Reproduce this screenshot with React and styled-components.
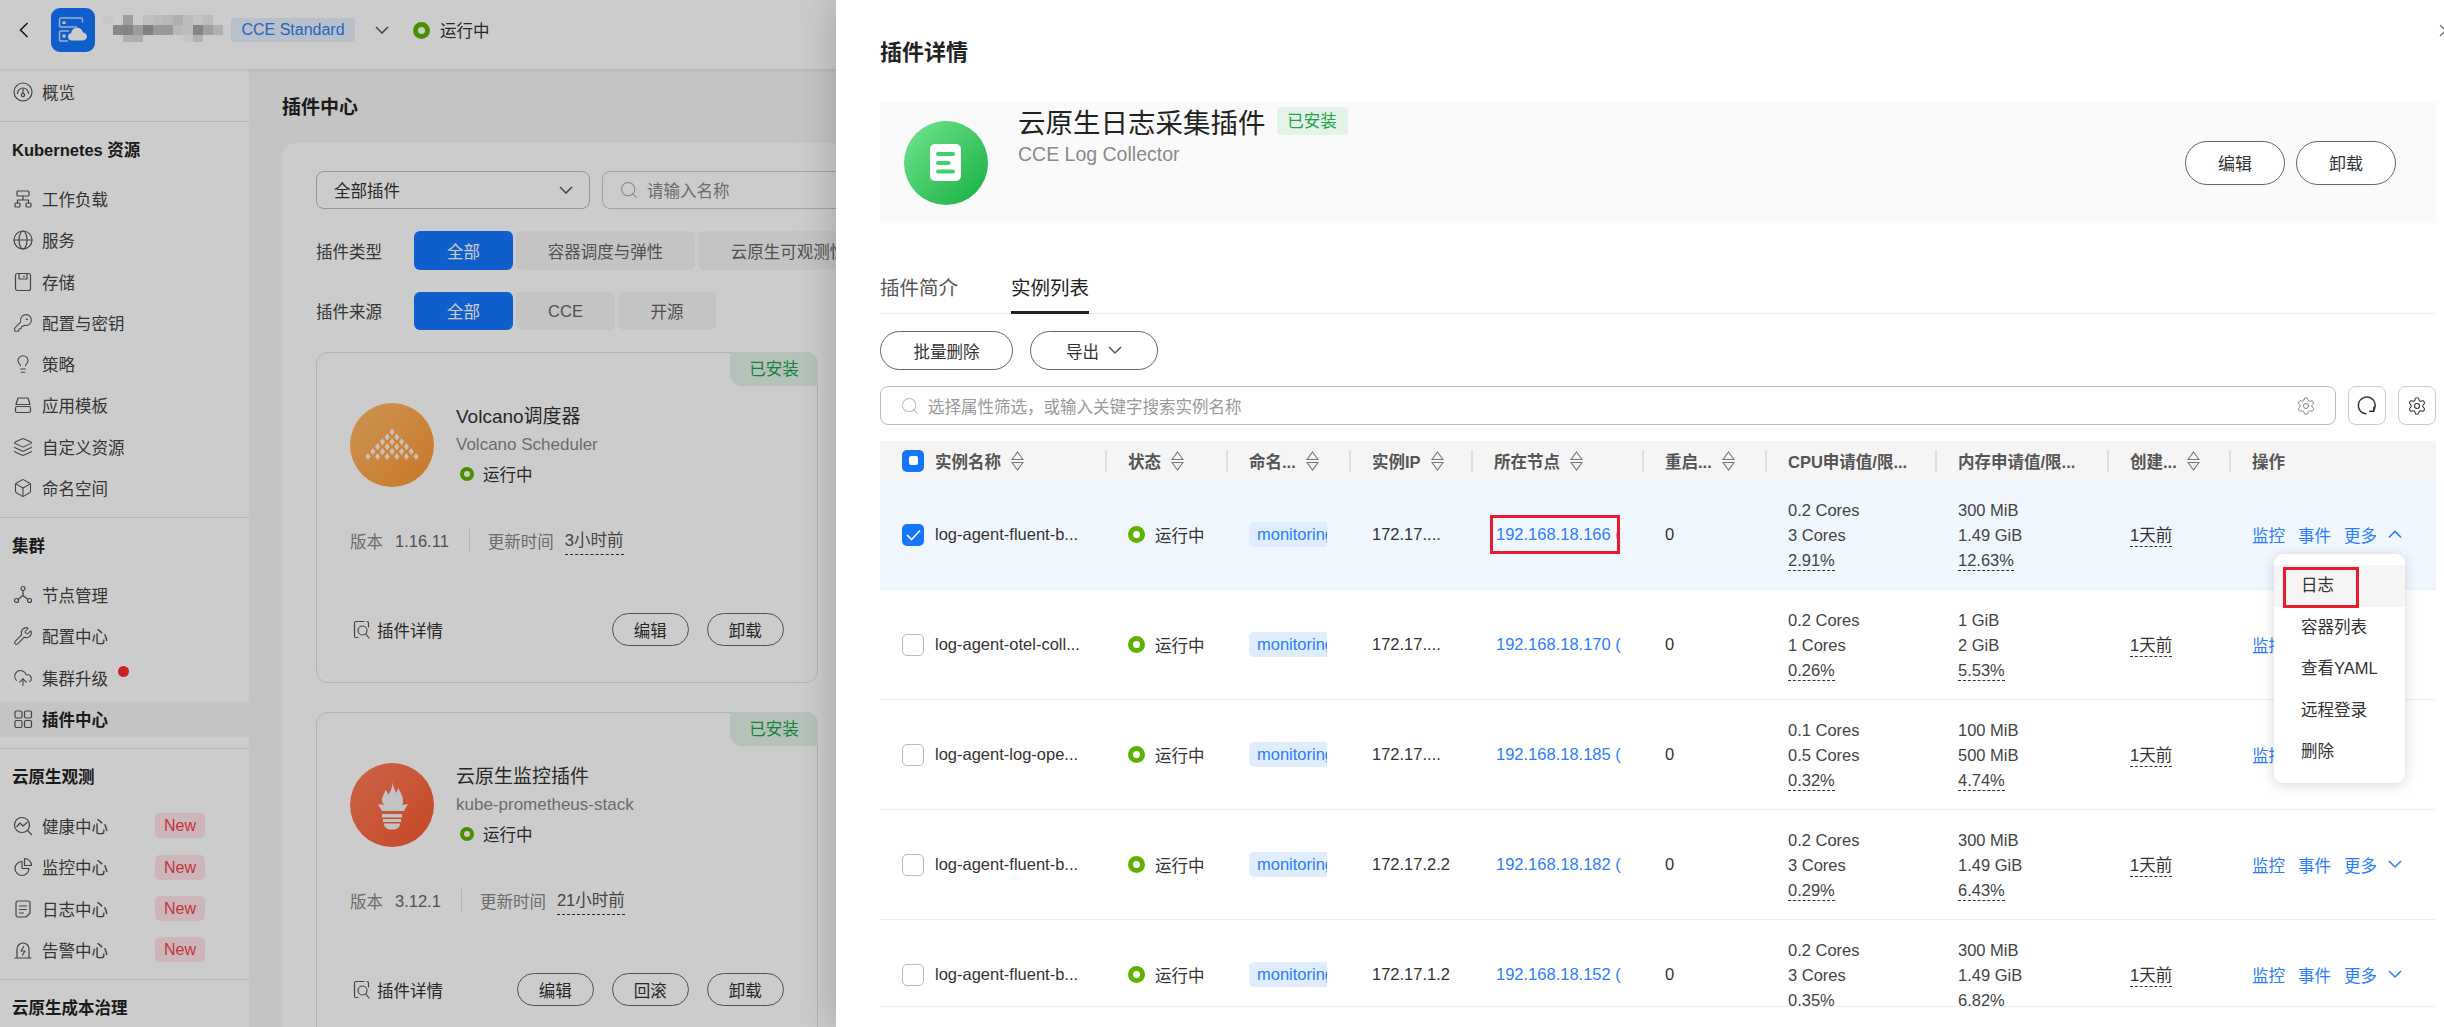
import React from 'react'
import styled, { createGlobalStyle } from 'styled-components'
import { KeyRound, Lightbulb, Layers, Box, Wrench, CloudUpload, Search, Settings } from 'lucide-react'

const FONT = '"Liberation Sans", "Noto Sans CJK SC", sans-serif'
const COLUMNS = '225px 121px 123px 122px 171px 123px 170px 172px 122px 207px'

const GlobalStyle = createGlobalStyle`
  html, body { margin: 0; padding: 0; background: #fff; }
  * { box-sizing: border-box; }
  body { font-family: ${FONT}; font-size: 16.5px; color: #333; }
`

/* page underneath the drawer */
const Page = styled.div`
  position: relative;
  width: 2444px;
  height: 1027px;
  overflow: hidden;
  background: #fff;
`
const TopBar = styled.header`
  height: 69px;
  display: flex;
  align-items: center;
  padding: 0 0 9px 19px;
  background: #fff;
  box-shadow: 0 1px 4px rgba(0, 0, 0, 0.08);
  position: relative;
`
const BackIcon = styled.svg`
  width: 10px;
  height: 16px;
  margin-right: 22px;
  fill: none;
  stroke: #222;
  stroke-width: 1.6;
`
const Logo = styled.div`
  width: 44px;
  height: 44px;
  border-radius: 9px;
  background: #1476ff;
  margin-right: 8px;
`
const Mosaic = styled.svg`
  width: 120px;
  height: 30px;
  margin-right: 8px;
`
const EditionBadge = styled.span`
  width: 124px;
  height: 24px;
  line-height: 24px;
  text-align: center;
  border-radius: 4px;
  background: #e6f0ff;
  color: #2f7df0;
  font-size: 16px;
`
const Chevron = styled.svg`
  width: ${p => p.$w || 14}px;
  height: ${p => (p.$w || 14) * 0.6}px;
  fill: none;
  stroke: ${p => p.$color || '#555'};
  stroke-width: 1.5;
  flex-shrink: 0;
  margin-left: ${p => p.$ml || 0}px;
`
const Ring = styled.span`
  display: inline-block;
  flex-shrink: 0;
  width: ${p => p.$size || 17}px;
  height: ${p => p.$size || 17}px;
  border-radius: 50%;
  border: ${p => Math.round((p.$size || 17) * 0.29)}px solid #5cb300;
  background: #fff;
`
const StatusRow = styled.div`
  display: flex;
  align-items: center;
  gap: ${p => p.$gap || 10}px;
  margin-left: ${p => p.$ml || 0}px;
  white-space: nowrap;
  color: #333;
`
const Body = styled.div`
  display: flex;
  height: 958px;
`
const Sidebar = styled.aside`
  width: 249px;
  flex-shrink: 0;
  background: #fff;
  overflow: hidden;
`
const NavGroup = styled.section`
  padding: ${p => p.$top ?? 8}px 0 11px;
  border-bottom: 1px solid #e8e8e8;
  &:last-child { border-bottom: none; }
`
const NavHeading = styled.h4`
  margin: 0 0 11px;
  height: 40px;
  line-height: 40px;
  padding-left: 12px;
  font-size: 16.5px;
  font-weight: 700;
  color: #222;
`
const NavList = styled.div`
  display: flex;
  flex-direction: column;
  gap: 5.3px;
`
const NavItem = styled.div`
  height: 36px;
  display: flex;
  align-items: center;
  gap: 9px;
  padding-left: 13px;
  background: ${p => (p.$active ? '#f5f5f5' : 'transparent')};
  font-weight: ${p => (p.$active ? 700 : 400)};
  color: ${p => (p.$active ? '#222' : '#444')};
`
const NewBadge = styled.span`
  margin-left: auto;
  margin-right: 44px;
  width: 50px;
  height: 25px;
  line-height: 25px;
  text-align: center;
  border-radius: 5px;
  background: #ffe4e8;
  color: #f5404c;
  font-size: 16px;
  font-weight: 400;
`
const RedDot = styled.span`
  width: 11px;
  height: 11px;
  border-radius: 50%;
  background: #ff2832;
  align-self: flex-start;
  margin: 6px 0 0 1px;
`
const IconSvg = styled.svg`
  width: 20px;
  height: 20px;
  flex-shrink: 0;
  fill: none;
  stroke: #555;
  stroke-width: 1.2;
  stroke-linecap: round;
  stroke-linejoin: round;
`
const Main = styled.main`
  flex: 1;
  min-width: 0;
  background: #f5f5f5;
  padding-left: 33px;
`
const PageTitle = styled.h2`
  margin: 0;
  padding-top: 23px;
  height: 74px;
  line-height: 32px;
  font-size: 19px;
  font-weight: 700;
  color: #222;
`
const ContentCard = styled.div`
  background: #fff;
  border-radius: 14px 0 0 0;
  padding: 28px 14px 0 34px;
  height: 900px;
`
const FilterRow = styled.div`
  display: flex;
  gap: 12px;
  height: 38px;
  margin-bottom: 22px;
`
const SelectBox = styled.div`
  width: 274px;
  display: flex;
  align-items: center;
  justify-content: space-between;
  padding: 0 16px 0 17px;
  border: 1px solid #bbb;
  border-radius: 8px;
  color: #333;
`
const SearchBox = styled.div`
  flex: 1;
  display: flex;
  align-items: center;
  gap: 8px;
  padding-left: 16px;
  border: 1px solid #ccc;
  border-radius: 8px;
  color: #888;
`
const ChipRow = styled.div`
  display: flex;
  align-items: center;
  height: ${p => p.$h}px;
  margin-bottom: 22px;
`
const ChipLabel = styled.span`
  width: 98px;
  color: #444;
  flex-shrink: 0;
`
const Chips = styled.div`
  display: flex;
  gap: 3px;
  height: 100%;
`
const Chip = styled.span`
  width: ${p => p.$w}px;
  flex-shrink: 0;
  display: flex;
  align-items: center;
  justify-content: center;
  border-radius: 6px;
  background: ${p => (p.$active ? '#1476ff' : '#f5f5f5')};
  color: ${p => (p.$active ? '#fff' : '#666')};
  white-space: nowrap;
  overflow: hidden;
`
const PluginCard = styled.article`
  position: relative;
  width: 502px;
  height: 331px;
  margin-bottom: 29px;
  padding: 50px 33px 0;
  border: 1px solid #e2e2e2;
  border-radius: 12px;
`
const Ribbon = styled.span`
  position: absolute;
  top: -1px;
  right: -1px;
  width: 88px;
  height: 34px;
  line-height: 34px;
  text-align: center;
  border-radius: 0 12px 0 12px;
  background: #e3f3e8;
  color: #1aa34a;
`
const PluginHead = styled.div`
  display: flex;
  gap: 22px;
  height: 84px;
`
const PluginIcon = styled.svg`
  width: 84px;
  height: 84px;
  flex-shrink: 0;
`
const PluginName = styled.div`
  height: 28px;
  line-height: 28px;
  font-size: 19px;
  color: #333;
`
const PluginSub = styled.div`
  height: 27px;
  line-height: 27px;
  font-size: 17px;
  color: #888;
`
const PluginStatus = styled.div`
  height: 32px;
  display: flex;
  align-items: center;
  gap: 9px;
  padding-left: 4px;
  color: #333;
`
const VersionRow = styled.div`
  display: flex;
  align-items: center;
  height: 24px;
  margin-top: 42px;
  color: #888;
`
const VersionValue = styled.span`
  margin-left: 12px;
  color: #666;
`
const VersionSep = styled.span`
  width: 1px;
  height: 24px;
  margin: 0 18px 0 20px;
  background: #e4e4e4;
`
const DashedValue = styled.span`
  position: relative;
  margin-left: 11px;
  color: #555;
  line-height: 24px;
  border-bottom: 1px dashed #333;
  padding-bottom: 2px;
`
const ActionRow = styled.div`
  display: flex;
  align-items: center;
  justify-content: space-between;
  margin-top: 60px;
  height: 33px;
`
const DetailLink = styled.span`
  display: flex;
  align-items: center;
  gap: 5px;
  padding-left: 2px;
  color: #333;
`
const ActionButtons = styled.div`
  display: flex;
  gap: 17.5px;
`
const PillButton = styled.button`
  width: ${p => p.$w || 77.5}px;
  height: ${p => p.$h || 33}px;
  display: flex;
  align-items: center;
  justify-content: center;
  gap: 9px;
  border: 1px solid #666;
  border-radius: 999px;
  background: #fff;
  color: #333;
  font: inherit;
  font-size: ${p => p.$fs || 16.5}px;
  padding: 0;
  flex-shrink: 0;
`
const Mask = styled.div`
  position: absolute;
  inset: 0;
  background: rgba(0, 0, 0, 0.2);
`

/* drawer */
const Drawer = styled.div`
  position: absolute;
  top: 0;
  left: 836px;
  width: 1608px;
  height: 1027px;
  padding: 38px 8px 0 44px;
  background: #fff;
  overflow: hidden;
  box-shadow: 0 0 36px rgba(0, 0, 0, 0.22);
`
const CloseIcon = styled.svg`
  position: absolute;
  top: 24px;
  right: -8px;
  width: 13px;
  height: 13px;
  fill: none;
  stroke: #777;
  stroke-width: 1.3;
`
const DrawerTitle = styled.h2`
  margin: 0;
  height: 30px;
  line-height: 30px;
  font-size: 22px;
  font-weight: 700;
  color: #222;
`
const Hero = styled.div`
  margin-top: 34px;
  height: 121px;
  display: flex;
  align-items: center;
  gap: 30px;
  padding: 0 40px 0 24px;
  background: #fafafa;
`
const HeroText = styled.div`
  align-self: flex-start;
  flex: 1;
`
const HeroNameRow = styled.div`
  height: 38px;
  display: flex;
  align-items: center;
  gap: 11px;
`
const HeroName = styled.span`
  font-size: 27.5px;
  color: #222;
`
const InstalledTag = styled.span`
  width: 71px;
  height: 28px;
  line-height: 28px;
  text-align: center;
  border-radius: 4px;
  background: #e3f3e8;
  color: #1aa34a;
`
const HeroSub = styled.div`
  height: 28px;
  line-height: 28px;
  font-size: 19.5px;
  color: #8a8a8a;
`
const HeroButtons = styled.div`
  display: flex;
  gap: 11px;
`
const Tabs = styled.div`
  margin-top: 40px;
  height: 51px;
  display: flex;
  gap: 53px;
  border-bottom: 1px solid #eee;
`
const Tab = styled.div`
  height: 51px;
  line-height: 50px;
  font-size: 19.5px;
  color: ${p => (p.$active ? '#222' : '#555')};
  border-bottom: ${p => (p.$active ? '3px solid #222' : 'none')};
`
const Toolbar = styled.div`
  margin-top: 17px;
  display: flex;
  gap: 17px;
`
const SearchRow = styled.div`
  margin-top: 16px;
  height: 39px;
  display: flex;
  gap: 11.5px;
`
const SearchField = styled.div`
  flex: 1;
  display: flex;
  align-items: center;
  gap: 8px;
  padding: 0 19px;
  border: 1px solid #bbb;
  border-radius: 8px;
  color: #999;
`
const SearchHint = styled.span`
  flex: 1;
`
const SquareButton = styled.div`
  width: 38.5px;
  height: 39px;
  display: flex;
  align-items: center;
  justify-content: center;
  border: 1px solid #ccc;
  border-radius: 8px;
`
const Table = styled.div`
  margin-top: 16px;
  height: 566px;
  overflow: hidden;
  border-bottom: 1px solid #eee;
`
const HeadRow = styled.div`
  display: grid;
  grid-template-columns: ${COLUMNS};
  height: 39px;
  background: #f5f5f5;
`
const HeadCell = styled.div`
  display: flex;
  align-items: center;
  gap: 10px;
  padding-left: 23px;
  font-weight: 700;
  color: #555;
  white-space: nowrap;
  position: relative;
  &:not(:first-child)::before {
    content: '';
    position: absolute;
    left: 0;
    top: 9px;
    bottom: 8px;
    width: 1.5px;
    background: #dedede;
  }
`
const NameHead = styled(HeadCell)`
  padding-left: 22px;
  gap: 0;
`
const HeadCheck = styled.span`
  width: 22px;
  height: 22px;
  margin-right: 11px;
  border-radius: 5px;
  background: #1476ff;
  display: flex;
  align-items: center;
  justify-content: center;
  &::after {
    content: '';
    width: 9px;
    height: 9px;
    border-radius: 2px;
    background: #fff;
  }
`
const SortIcon = styled.svg`
  width: 13px;
  height: 20px;
  fill: none;
  stroke: #777;
  stroke-width: 1.1;
  flex-shrink: 0;
`
const SortGap = styled(SortIcon)`
  margin-left: 10px;
`
const Row = styled.div`
  display: grid;
  grid-template-columns: ${COLUMNS};
  height: 110px;
  border-bottom: 1px solid #eee;
  background: ${p => (p.$selected ? '#f0f7ff' : '#fff')};
`
const Cell = styled.div`
  display: flex;
  align-items: center;
  padding-left: 23px;
  color: #333;
  position: relative;
  white-space: nowrap;
`
const NameCell = styled(Cell)`
  padding-left: 22px;
  gap: 11px;
`
const Check = styled.span`
  width: 22px;
  height: 22px;
  flex-shrink: 0;
  border-radius: 5px;
  border: ${p => (p.$on ? 'none' : '1px solid #bbb')};
  background: ${p => (p.$on ? '#1476ff' : '#fff')};
  display: flex;
  align-items: center;
  justify-content: center;
`
const CheckMark = styled.svg`
  width: 15px;
  height: 12px;
  fill: none;
  stroke: #fff;
  stroke-width: 1.6;
`
const NsTag = styled.span`
  width: 78px;
  height: 25px;
  line-height: 25px;
  padding-left: 8px;
  overflow: hidden;
  border-radius: 5px 0 0 5px;
  background: #e0edff;
  color: #2a7dff;
`
const NodeLink = styled.span`
  display: block;
  width: 126px;
  margin-left: 2px;
  overflow: hidden;
  color: #2a7dff;
`
const RedBox = styled.span`
  position: absolute;
  left: 19px;
  top: 35px;
  width: 130px;
  height: 39px;
  border: 3px solid #ea1c2c;
  pointer-events: none;
`
const Lines = styled.div`
  display: flex;
  flex-direction: column;
  align-items: flex-start;
  line-height: 25px;
  color: #444;
`
const UsageLine = styled.span`
  height: 23px;
  line-height: 24px;
  border-bottom: 1px dashed #333;
`
const Dashed = styled.span`
  height: 24px;
  line-height: 24px;
  border-bottom: 1px dashed #333;
`
const OpLink = styled.span`
  color: #2a7dff;
`
const Ops = styled.div`
  display: flex;
  align-items: center;
  gap: 13px;
`
const Dropdown = styled.div`
  position: absolute;
  left: 45px;
  top: 74px;
  width: 131px;
  height: 229px;
  padding-top: 11px;
  background: #fff;
  border-radius: 9px;
  box-shadow: 0 2px 14px rgba(0, 0, 0, 0.16);
  z-index: 3;
`
const DropItem = styled.div`
  position: relative;
  height: 41.5px;
  line-height: 41.5px;
  padding-left: 27px;
  color: #333;
  background: ${p => (p.$hover ? '#f5f5f5' : 'transparent')};
`
const DropBox = styled.span`
  position: absolute;
  left: 9px;
  top: 2px;
  width: 76px;
  height: 41px;
  border: 3px solid #ea1c2c;
`

const Ic = ({ children }) => <IconSvg viewBox="0 0 20 20">{children}</IconSvg>
const Lu = ({ as: C }) => <C size={20} strokeWidth={1.25} color="#555" style={{ flexShrink: 0 }} />

const navIcons = {
  overview: <Ic><circle cx="10" cy="10" r="9" /><path d="M4.5 11.5a5.5 5.5 0 1 1 11 0" /><circle cx="10" cy="13" r="1.6" /><path d="M10 7v4.4" /></Ic>,
  workload: <Ic><rect x="4" y="2" width="12" height="5" rx="1" /><path d="M10 7v4M4.5 14v-3h11v3" /><rect x="2" y="14" width="5" height="4" rx="1" /><rect x="13" y="14" width="5" height="4" rx="1" /></Ic>,
  service: <Ic><circle cx="10" cy="10" r="9" /><ellipse cx="10" cy="10" rx="4" ry="9" /><path d="M1 10h18" /></Ic>,
  storage: <Ic><rect x="2.5" y="1.5" width="15" height="17" rx="2" /><path d="M6 1.5V7h8V1.5M11 4v1" /></Ic>,
  secret: <Lu as={KeyRound} />,
  policy: <Lu as={Lightbulb} />,
  template: <Ic><path d="M5 3h10l2 6.5H3z" /><rect x="2.5" y="11.5" width="15" height="6" rx="1.5" /></Ic>,
  crd: <Lu as={Layers} />,
  ns: <Lu as={Box} />,
  node: <Ic><circle cx="10" cy="3.5" r="2" /><circle cx="3.5" cy="15.5" r="2" /><circle cx="16.5" cy="15.5" r="2" /><path d="M10 5.5v5M5.2 14.3l4.8-3.8 4.8 3.8" /></Ic>,
  config: <Lu as={Wrench} />,
  upgrade: <Lu as={CloudUpload} />,
  plugin: <Ic><rect x="2" y="2" width="7" height="7" rx="1.5" /><rect x="11.5" y="2" width="7" height="7" rx="1.5" /><rect x="2" y="11.5" width="7" height="7" rx="1.5" /><rect x="11.5" y="11.5" width="7" height="7" rx="1.5" /></Ic>,
  health: <Ic><circle cx="9" cy="9" r="7.5" /><path d="M14.5 14.5l4 4M4 10.5l3-3.5 3 3 4-3.5" /></Ic>,
  monitor: <Ic><path d="M9 4.5a7 7 0 1 0 7 7H9z" /><path d="M11.5 1.5a7 7 0 0 1 7 7h-7z" /></Ic>,
  log: <Ic><path d="M5 2h10a2 2 0 0 1 2 2v10l-4 4H5a2 2 0 0 1-2-2V4a2 2 0 0 1 2-2z" /><path d="M6.5 7h7M6.5 10.5h7M6.5 14h4" /></Ic>,
  alert: <Ic><path d="M4 17.5V9a6 6 0 0 1 12 0v8.5" /><path d="M2 18h16" /><path d="M10.8 6.5L8 11h4l-2.5 4" /></Ic>,
}

const navGroups = [
  { top: 5, items: [['overview', '概览']] },
  { title: 'Kubernetes 资源', items: [['workload', '工作负载'], ['service', '服务'], ['storage', '存储'], ['secret', '配置与密钥'], ['policy', '策略'], ['template', '应用模板'], ['crd', '自定义资源'], ['ns', '命名空间']] },
  { title: '集群', items: [['node', '节点管理'], ['config', '配置中心'], ['upgrade', '集群升级', 'dot'], ['plugin', '插件中心', 'active']] },
  { title: '云原生观测', items: [['health', '健康中心', 'new'], ['monitor', '监控中心', 'new'], ['log', '日志中心', 'new'], ['alert', '告警中心', 'new']] },
  { title: '云原生成本治理', items: [] },
]

// mosaic over the cluster name: [x, y, height, grey as it shows through the mask]
const mosaic = [
  [0, 0, 10, 200], [20, 0, 10, 158], [40, 0, 10, 192], [50, 0, 10, 189], [60, 0, 10, 184], [70, 0, 10, 175], [80, 0, 10, 189], [90, 0, 10, 196], [100, 0, 10, 188],
  [10, 10, 10, 136], [20, 10, 10, 133], [30, 10, 10, 156], [40, 10, 10, 127], [50, 10, 10, 152], [60, 10, 10, 154], [70, 10, 10, 184], [80, 10, 10, 190], [90, 10, 10, 133], [100, 10, 10, 160], [110, 10, 10, 176],
  [20, 20, 7, 176], [30, 20, 7, 174], [80, 20, 7, 198], [90, 20, 7, 178],
]

const ChevronDown = props => <Chevron viewBox="0 0 14 8.4" {...props}><path d="M1 1l6 6 6-6" /></Chevron>
const ChevronUp = props => <Chevron viewBox="0 0 14 8.4" {...props}><path d="M1 7.4l6-6 6 6" /></Chevron>
const Sort = ({ spaced }) => {
  const C = spaced ? SortGap : SortIcon
  return <C viewBox="0 0 13 20"><path d="M6.5 1L12 8.5H1zM1 11.5h11L6.5 19z" /></C>
}

const VolcanoIcon = () => {
  const dots = []
  for (let r = 0; r < 6; r++) {
    for (let c = 0; c <= r; c++) {
      const x = 42 + (c - r / 2) * 9.6
      const y = 29 + r * 4.9
      dots.push(<path key={`${r}-${c}`} d={`M${x} ${y - 3.6}l2.6 3.6-2.6 3.6-2.6-3.6z`} fill="#fff" fillOpacity="0.85" />)
    }
  }
  return (
    <PluginIcon viewBox="0 0 84 84">
      <defs>
        <linearGradient id="volcano" x1="0" y1="0" x2="1" y2="1">
          <stop offset="0" stopColor="#ffb96a" />
          <stop offset="1" stopColor="#fb9632" />
        </linearGradient>
      </defs>
      <circle cx="42" cy="42" r="42" fill="url(#volcano)" />
      {dots}
    </PluginIcon>
  )
}

const PrometheusIcon = () => (
  <PluginIcon viewBox="0 0 84 84">
    <defs>
      <linearGradient id="prom" x1="0" y1="0" x2="1" y2="1">
        <stop offset="0" stopColor="#ff7d5a" />
        <stop offset="1" stopColor="#f65a30" />
      </linearGradient>
    </defs>
    <circle cx="42" cy="42" r="42" fill="url(#prom)" />
    <path d="M42 18c1 6 3 8 4 12 1-2 2-3 2-5 3 5 5 8 5 13 0 2 0 3-1 4l6-1-4 7H32l-4-7 6 1c-1-2-2-3-2-5 0-4 3-6 3-10 2 1 3 3 3 5 3-4 5-8 4-14z" fill="#f4f4f4" />
    <rect x="32" y="51" width="20" height="3.5" fill="#f4f4f4" />
    <rect x="33" y="56" width="18" height="3" fill="#f4f4f4" />
    <path d="M34 60.5h16c0 4-3 6-8 6s-8-2-8-6z" fill="#f4f4f4" />
  </PluginIcon>
)

const LogIcon = () => (
  <PluginIcon viewBox="0 0 84 84">
    <defs>
      <linearGradient id="logc" x1="0" y1="0" x2="1" y2="1">
        <stop offset="0" stopColor="#74e68f" />
        <stop offset="1" stopColor="#15ae42" />
      </linearGradient>
    </defs>
    <circle cx="42" cy="42" r="42" fill="url(#logc)" />
    <rect x="26" y="23" width="31" height="37" rx="5" fill="#fff" />
    <rect x="32" y="31" width="19" height="4" rx="2" fill="#3fd06c" />
    <rect x="32" y="40" width="14.5" height="4" rx="2" fill="#3fd06c" />
    <rect x="32" y="48.5" width="19" height="4" rx="2" fill="#3fd06c" />
  </PluginIcon>
)

const DetailIcon = () => (
  <Ic><path d="M12 1.5H4a1.5 1.5 0 0 0-1.5 1.5v13A1.5 1.5 0 0 0 4 17.5h2" /><path d="M16.5 7V3A1.5 1.5 0 0 0 15 1.5" /><circle cx="10.5" cy="10.5" r="4.5" /><path d="M13.8 14l3.2 4" /></Ic>
)

const rows = [
  { name: 'log-agent-fluent-b...', ip: '172.17....', node: '192.168.18.166', cpu: ['0.2 Cores', '3 Cores', '2.91%'], mem: ['300 MiB', '1.49 GiB', '12.63%'], selected: true },
  { name: 'log-agent-otel-coll...', ip: '172.17....', node: '192.168.18.170', cpu: ['0.2 Cores', '1 Cores', '0.26%'], mem: ['1 GiB', '2 GiB', '5.53%'] },
  { name: 'log-agent-log-ope...', ip: '172.17....', node: '192.168.18.185', cpu: ['0.1 Cores', '0.5 Cores', '0.32%'], mem: ['100 MiB', '500 MiB', '4.74%'] },
  { name: 'log-agent-fluent-b...', ip: '172.17.2.2', node: '192.168.18.182', cpu: ['0.2 Cores', '3 Cores', '0.29%'], mem: ['300 MiB', '1.49 GiB', '6.43%'] },
  { name: 'log-agent-fluent-b...', ip: '172.17.1.2', node: '192.168.18.152', cpu: ['0.2 Cores', '3 Cores', '0.35%'], mem: ['300 MiB', '1.49 GiB', '6.82%'] },
]

const Usage = ({ values }) => (
  <Lines>
    <span>{values[0]}</span>
    <span>{values[1]}</span>
    <UsageLine>{values[2]}</UsageLine>
  </Lines>
)

const Plugin = ({ icon, name, sub, version, updated, rollback }) => (
  <PluginCard>
    <Ribbon>已安装</Ribbon>
    <PluginHead>
      {icon}
      <div>
        <PluginName>{name}</PluginName>
        <PluginSub>{sub}</PluginSub>
        <PluginStatus><Ring $size={14} />运行中</PluginStatus>
      </div>
    </PluginHead>
    <VersionRow>
      <span>版本</span>
      <VersionValue>{version}</VersionValue>
      <VersionSep />
      <span>更新时间</span>
      <DashedValue>{updated}</DashedValue>
    </VersionRow>
    <ActionRow>
      <DetailLink><DetailIcon />插件详情</DetailLink>
      <ActionButtons>
        <PillButton>编辑</PillButton>
        {rollback && <PillButton>回滚</PillButton>}
        <PillButton>卸载</PillButton>
      </ActionButtons>
    </ActionRow>
  </PluginCard>
)

export default function App() {
  return (
    <Page>
      <GlobalStyle />
      <TopBar>
        <BackIcon viewBox="0 0 10 16"><path d="M8.5 1L1.5 8l7 7" /></BackIcon>
        <Logo>
          <svg viewBox="0 0 44 44" width="44" height="44">
            <g fill="none" stroke="#fff" strokeOpacity="0.75" strokeWidth="1.5">
              <path d="M26 19H10a1.5 1.5 0 0 1-1.5-1.5v-6A1.5 1.5 0 0 1 10 10h20a1.5 1.5 0 0 1 1.5 1.5v3" />
              <path d="M17 33h-7a1.5 1.5 0 0 1-1.5-1.5v-7A1.5 1.5 0 0 1 10 23h8" />
            </g>
            <rect x="11.5" y="13.5" width="3" height="2.5" fill="#fff" />
            <rect x="11.5" y="26.5" width="3" height="3" fill="#fff" />
            <path d="M21 32.5c-2.6 0-4-1.8-4-3.8 0-1.9 1.4-3.4 3.2-3.6.4-3.2 2.8-5.4 5.8-5.4 3 0 5.3 2 6 4.7 2.3.2 4 2 4 4.2 0 2.2-1.8 3.9-4 3.9z" fill="#fff" />
          </svg>
        </Logo>
        <Mosaic viewBox="0 0 120 30">
          {mosaic.map(([x, y, h, v]) => (
            <rect key={`${x}-${y}`} x={x} y={y} width="10" height={h} fill="#000" fillOpacity={1 - v / 204} />
          ))}
        </Mosaic>
        <EditionBadge>CCE Standard</EditionBadge>
        <ChevronDown $ml={20} />
        <StatusRow $ml={24}><Ring />运行中</StatusRow>
      </TopBar>
      <Body>
        <Sidebar>
          {navGroups.map((group, i) => (
            <NavGroup key={i} $top={group.top}>
              {group.title && <NavHeading>{group.title}</NavHeading>}
              <NavList>
                {group.items.map(([icon, label, flag]) => (
                  <NavItem key={label} $active={flag === 'active'}>
                    {navIcons[icon]}
                    {label}
                    {flag === 'dot' && <RedDot />}
                    {flag === 'new' && <NewBadge>New</NewBadge>}
                  </NavItem>
                ))}
              </NavList>
            </NavGroup>
          ))}
        </Sidebar>
        <Main>
          <PageTitle>插件中心</PageTitle>
          <ContentCard>
            <FilterRow>
              <SelectBox>全部插件<ChevronDown /></SelectBox>
              <SearchBox><Search size={20} strokeWidth={1.25} color="#aaa" />请输入名称</SearchBox>
            </FilterRow>
            <ChipRow $h={39}>
              <ChipLabel>插件类型</ChipLabel>
              <Chips>
                <Chip $w={99} $active>全部</Chip>
                <Chip $w={179}>容器调度与弹性</Chip>
                <Chip $w={181}>云原生可观测性</Chip>
              </Chips>
            </ChipRow>
            <ChipRow $h={38}>
              <ChipLabel>插件来源</ChipLabel>
              <Chips>
                <Chip $w={99} $active>全部</Chip>
                <Chip $w={99}>CCE</Chip>
                <Chip $w={98}>开源</Chip>
              </Chips>
            </ChipRow>
            <Plugin icon={<VolcanoIcon />} name="Volcano调度器" sub="Volcano Scheduler" version="1.16.11" updated="3小时前" />
            <Plugin icon={<PrometheusIcon />} name="云原生监控插件" sub="kube-prometheus-stack" version="3.12.1" updated="21小时前" rollback />
          </ContentCard>
        </Main>
      </Body>
      <Mask />
      <Drawer>
        <CloseIcon viewBox="0 0 13 13"><path d="M1 1l11 11M12 1L1 12" /></CloseIcon>
        <DrawerTitle>插件详情</DrawerTitle>
        <Hero>
          <LogIcon />
          <HeroText>
            <HeroNameRow>
              <HeroName>云原生日志采集插件</HeroName>
              <InstalledTag>已安装</InstalledTag>
            </HeroNameRow>
            <HeroSub>CCE Log Collector</HeroSub>
          </HeroText>
          <HeroButtons>
            <PillButton $w={100} $h={44} $fs={17}>编辑</PillButton>
            <PillButton $w={100} $h={44} $fs={17}>卸载</PillButton>
          </HeroButtons>
        </Hero>
        <Tabs>
          <Tab>插件简介</Tab>
          <Tab $active>实例列表</Tab>
        </Tabs>
        <Toolbar>
          <PillButton $w={133} $h={39}>批量删除</PillButton>
          <PillButton $w={128} $h={39}>导出<ChevronDown /></PillButton>
        </Toolbar>
        <SearchRow>
          <SearchField>
            <Search size={20} strokeWidth={1.25} color="#bbb" />
            <SearchHint>选择属性筛选，或输入关键字搜索实例名称</SearchHint>
            <Settings size={20} strokeWidth={1.1} color="#777" />
          </SearchField>
          <SquareButton>
            <svg width="21" height="21" viewBox="0 0 20 20" fill="none" stroke="#333" strokeWidth="1.3">
              <path d="M16.5 15A8 8 0 1 0 10 18" />
              <path d="M17 11v4.5h-4.5" />
            </svg>
          </SquareButton>
          <SquareButton><Settings size={20} strokeWidth={1.3} color="#333" /></SquareButton>
        </SearchRow>
        <Table>
          <HeadRow>
            <NameHead><HeadCheck />实例名称<Sort spaced /></NameHead>
            <HeadCell>状态<Sort /></HeadCell>
            <HeadCell>命名...<Sort /></HeadCell>
            <HeadCell>实例IP<Sort /></HeadCell>
            <HeadCell>所在节点<Sort /></HeadCell>
            <HeadCell>重启...<Sort /></HeadCell>
            <HeadCell>CPU申请值/限...</HeadCell>
            <HeadCell>内存申请值/限...</HeadCell>
            <HeadCell>创建...<Sort /></HeadCell>
            <HeadCell>操作</HeadCell>
          </HeadRow>
          {rows.map((row, i) => (
            <Row key={i} $selected={row.selected}>
              <NameCell>
                <Check $on={row.selected}>
                  {row.selected && <CheckMark viewBox="0 0 15 12"><path d="M1 6l4.5 4.5L14 1.5" /></CheckMark>}
                </Check>
                {row.name}
              </NameCell>
              <Cell><StatusRow><Ring />运行中</StatusRow></Cell>
              <Cell><NsTag>monitoring</NsTag></Cell>
              <Cell>{row.ip}</Cell>
              <Cell>
                <NodeLink>{row.node} (</NodeLink>
                {row.selected && <RedBox />}
              </Cell>
              <Cell>0</Cell>
              <Cell><Usage values={row.cpu} /></Cell>
              <Cell><Usage values={row.mem} /></Cell>
              <Cell><Dashed>1天前</Dashed></Cell>
              <Cell>
                <Ops>
                  <OpLink>监控</OpLink>
                  <OpLink>事件</OpLink>
                  <OpLink>更多</OpLink>
                </Ops>
                {row.selected ? <ChevronUp $color="#2a7dff" $ml={11} /> : <ChevronDown $color="#2a7dff" $ml={11} />}
                {row.selected && (
                  <Dropdown>
                    <DropItem $hover>日志<DropBox /></DropItem>
                    <DropItem>容器列表</DropItem>
                    <DropItem>查看YAML</DropItem>
                    <DropItem>远程登录</DropItem>
                    <DropItem>删除</DropItem>
                  </Dropdown>
                )}
              </Cell>
            </Row>
          ))}
        </Table>
      </Drawer>
    </Page>
  )
}
